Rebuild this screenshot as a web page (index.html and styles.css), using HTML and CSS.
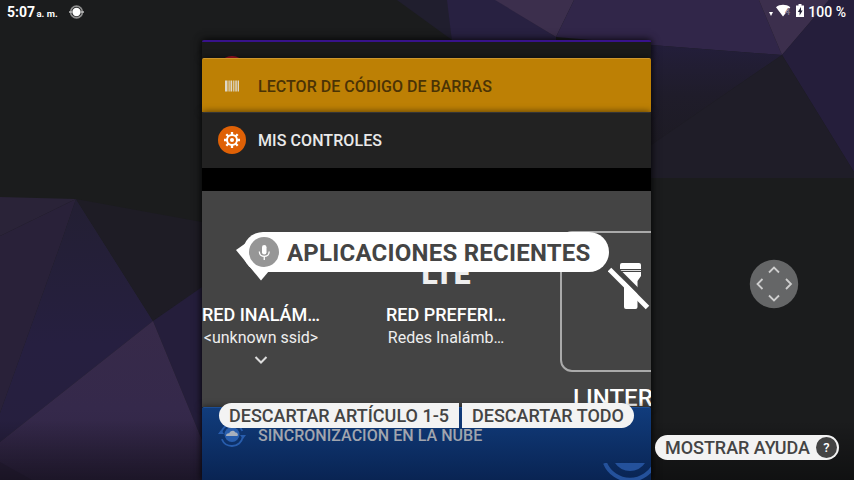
FILE: index.html
```html
<!DOCTYPE html>
<html lang="es">
<head>
<meta charset="utf-8">
<title>Aplicaciones recientes</title>
<link rel="stylesheet" href="styles.css">
</head>
<body>
<div class="screen">
  <svg class="wallpaper" viewBox="0 0 854 480" aria-hidden="true">
    <defs>
      <linearGradient id="violet" x1="0" y1="0" x2="0" y2="1"><stop offset="0" stop-color="#231f33"/><stop offset=".6" stop-color="#261f40"/><stop offset="1" stop-color="#261f3e"/></linearGradient>
      <linearGradient id="plum" x1="0" y1="0" x2="0" y2="1"><stop offset="0" stop-color="#372a49"/><stop offset=".55" stop-color="#35294b"/><stop offset="1" stop-color="#2f2442"/></linearGradient>
      <linearGradient id="dusk" x1="0" y1="0" x2="0" y2="1"><stop offset="0" stop-color="#231e3a"/><stop offset=".5" stop-color="#1f1c2a"/><stop offset="1" stop-color="#1d1b24"/></linearGradient>
      <linearGradient id="fade" x1="0" y1="0" x2="0" y2="1"><stop offset="0" stop-opacity="0"/><stop offset="1" stop-opacity=".4"/></linearGradient>
    </defs>
    <path fill="#1b1c1d" d="M0 0h854v480H0z"/>
    <path fill="#2a2338" d="M0 197l76 2L0 236z"/>
    <path fill="#292139" d="M0 236L76 199 62 240 0 413z"/>
    <path fill="url(#violet)" d="M76 199l77 122L0 442V413L62 240z"/>
    <path fill="#1e1c25" d="M76 199l126 23v65l-49 34z"/>
    <path fill="#251e3b" d="M153 321l49-34v153z"/>
    <path fill="url(#plum)" d="M153 321l49 119v40H0v-38z"/>
    <path fill="#2b213c" d="M0 462l32 18H0z"/>
    <path fill="#201e2e" d="M397 0h51l4 40z"/>
    <path fill="#282141" d="M447 0h49l60 37v5H452z"/>
    <path fill="#3c2f4d" d="M495 0h79l-18 37z"/>
    <path fill="#312649" d="M574 0h185l23 55-131-10-95-8z"/>
    <path fill="#3c2f4d" d="M759 0h70l-47 55z"/>
    <path fill="#251e3b" d="M829 0h25v172L782 55z"/>
    <path fill="url(#dusk)" d="M651 45l131 10-131 90z"/>
    <path fill="#1f1d28" d="M782 55l72 117v6H651v-33z"/>
    <path fill="url(#fade)" d="M0 420h854v60H0z"/>
  </svg>

  <header class="status">
    <div class="status-left">
      <span class="clock">5:07 <small>a. m.</small></span>
      <svg width="15" height="14" viewBox="0 0 15 14"><circle cx="7.500" cy="7" r="5.900" fill="none" stroke="#8e8e8e" stroke-width="1.600"/><circle cx="7.500" cy="7" r="4.200" fill="#fff"/><path d="M0 7h3M12 7h3" stroke="#bbb" stroke-width="1.500"/></svg>
    </div>
    <div class="status-right">
      <svg width="36" height="16" viewBox="0 0 36 16"><path fill="#fff" d="M0 9h4l-2 4zM7 4.200c4-3.200 10-3.200 14.300 0L14 13.600z"/><text x="16" y="12" class="net">4</text><path fill="#fff" d="M29.500 1h3v1.400H35V14h-8V2.400h2.500z"/><path fill="#222036" d="M32 4l-3.200 5h1.800v3.500l3-5h-1.600z"/></svg>
      <span class="charge">100 %</span>
    </div>
  </header>

  <main class="stack">
    <section class="card card-back"><svg width="28" height="2" viewBox="0 0 28 2"><circle cx="14" cy="14" r="14" fill="#ab1224"/></svg></section>
    <section class="card card-scan">
      <svg class="app-icon" viewBox="0 0 28 28"><path fill="#ded7c8" d="M7 8.500h2.500v11H7zM10.500 8.500h1.200v11h-1.200zM12.500 8.500h1.700v11h-1.700zM15.200 8.500h1.200v11h-1.200zM17.300 8.500h1.500v11h-1.500zM19.600 8.500H21v11h-1.400z"/></svg>
      <h2 class="scan-title">LECTOR DE CÓDIGO DE BARRAS</h2>
    </section>
    <section class="card card-controls">
      <div class="card-head">
        <svg class="app-icon" viewBox="0 0 28 28"><circle cx="14" cy="14" r="14" fill="#df6106"/><circle cx="14" cy="14" r="5" fill="none" stroke="#fff" stroke-width="2"/><circle cx="14" cy="14" r="2" fill="#fff"/><g stroke="#fff" stroke-width="2.300"><path d="M14 6v3M14 19v3M6 14h3M19 14h3M8.300 8.300l2.200 2.200M17.500 17.500l2.200 2.200M8.300 19.700l2.200-2.200M17.500 10.500l2.200-2.200"/></g></svg>
        <h2 class="controls-title">MIS CONTROLES</h2>
      </div>
      <div class="black-band"></div>
      <div class="tiles">
        <div class="tile tile-wifi">
          <b>RED INALÁM…</b><span>&lt;unknown ssid&gt;</span>
          <svg class="chev" width="14" height="8" viewBox="0 0 14 8"><path d="M1.500 1L7 6.500 12.500 1"/></svg>
        </div>
        <div class="tile tile-net"><em>LTE</em><b>RED PREFERI…</b><span>Redes Inalámb…</span></div>
        <div class="tile-torch">
          <div class="torch-frame"><svg width="42" height="48" viewBox="0 0 42 48"><path fill="#fff" d="M14 0h17q2 0 2 2v4H12V2q0-2 2-2z"/><path fill="#ddd" d="M12 7h21v1H12z"/><path fill="#fff" d="M12 9h21v4l-3.500 5v26q0 2-2 2H18q-2 0-2-2V18l-4-5z"/><path d="M5 3l38 38" stroke="#444" stroke-width="5"/><path d="M1.500 6.500l38 38" stroke="#fff" stroke-width="5"/></svg></div>
          <strong>LINTERNA</strong>
        </div>
      </div>
    </section>
    <section class="card card-sync">
      <svg class="app-icon" viewBox="0 0 28 28"><circle cx="14" cy="14" r="11" fill="none" stroke="#285dad" stroke-width="1.800" stroke-dasharray="28 6.560" stroke-dashoffset="-2"/><path fill="#285dad" d="M0 13l3-4 3 4zM22 14h6l-3 4z"/><circle cx="14" cy="13.500" r="7.500" fill="#285dad"/><path fill="#a8b0bd" d="M8 15c0-2 2-3 3-2.500 1-3 5-4 6.500-1 2 0 3 2 2 3.500z"/></svg>
      <h2 class="sync-title">SINCRONIZACIÓN EN LA NUBE</h2>
      <svg class="sync-art" width="49" height="17" viewBox="0 0 49 17"><path d="M3 0A27 27 0 0 0 53 0" fill="none" stroke="#24519b" stroke-width="4"/><path fill="#24519b" d="M13 0h30A18 18 0 0 1 13 0z"/></svg>
    </section>
  </main>

  <div class="voice-label">
    <svg class="pointer" width="42" height="49" viewBox="0 0 42 49"><path fill="#fff" d="M0 18l10-7 23 28-8 9.500z"/></svg>
    <svg class="mic" width="30" height="30" viewBox="0 0 30 30"><circle cx="15" cy="15" r="15" fill="#969696"/><rect x="13" y="8" width="4.500" height="9.500" rx="2.250" fill="#fff"/><path d="M10.300 14.500c0 6.500 9.900 6.500 9.900 0M15.250 19.500v3.500" fill="none" stroke="#fff" stroke-width="1.300"/></svg>
    <span>APLICACIONES RECIENTES</span>
  </div>
  <div class="dismiss">
    <button class="one">DESCARTAR ARTÍCULO 1-5</button><button class="all">DESCARTAR TODO</button>
  </div>
  <svg class="pad" width="50" height="50" viewBox="0 0 50 50"><circle cx="25" cy="25" r="24.200" fill="#656667"/><path fill="none" stroke="#cecece" stroke-width="1.800" d="M20 13.500l5-5 5 5M20 36.500l5 5 5-5M13.500 20l-5 5 5 5M37 20l5 5-5 5"/></svg>
  <button class="help"><span>MOSTRAR AYUDA</span><i>?</i></button>
</div>
</body>
</html>
```
FILE: styles.css
```css
* { box-sizing: border-box; }
body { margin: 0; font-family: Roboto, "Noto Sans", sans-serif; background: #1b1c1d; }
h2, button { margin: 0; font: inherit; font-weight: 500; white-space: nowrap; }
svg { display: block; flex: none; }
.screen { position: relative; width: 854px; height: 480px; overflow: hidden; }
.wallpaper { position: absolute; inset: 0; width: 100%; height: 100%; }
.status { position: absolute; top: 0; left: 0; right: 0; height: 24px; padding: 0 8px 0 7px; display: flex; justify-content: space-between; color: #fff; font-weight: 500; font-size: 14px; }
.status-left, .status-right { display: flex; align-items: center; }
.status-left { gap: 11px; }
.status-right { gap: 3px; }
.status-right svg { margin-top: -3px; }
.clock { width: 51px; font-weight: 700; white-space: nowrap; }
.clock small { font-size: 9.5px; margin-left: -2px; }
.net { font-size: 9px; font-weight: 700; fill: #777087; }
.stack { position: relative; width: 449px; height: 440px; margin: 40px 0 0 202px; display: flex; flex-direction: column; box-shadow: 0 0 8px #0008; }
.card { position: relative; flex: none; border-radius: 2px 2px 0 0; box-shadow: 0 0 7px #0009; }
.card h2 { font-size: 16px; letter-spacing: 0.04px; }
.app-icon { width: 28px; height: 28px; }
.card-back { height: 18px; background: #1a1a1a; border-top: 2px solid #38128b; display: flex; align-items: flex-end; padding-left: 16px; }
.card-scan { height: 54px; display: flex; align-items: center; gap: 12px; padding: 2px 16px 0; background: #bd8005; border-top: 1px solid #ce962c; color: #4b3305; }
.card-scan .app-icon, .card-head .app-icon { margin-top: -2px; }
.card-controls { height: 295px; background: #444; overflow: hidden; }
.card-head { height: 56px; display: flex; align-items: center; gap: 12px; padding: 0 16px; background: #222; border-top: 1px solid #353535; color: #e9e9e9; }
.card-head h2 { letter-spacing: 0.08px; }
.black-band { height: 23px; background: #000; }
.tiles { height: 216px; display: grid; grid-template-columns: 118px 132px 1fr; column-gap: 54px; }
.tile { display: flex; flex-direction: column; align-items: center; color: #fff; white-space: nowrap; }
.tile b { font-weight: 500; font-size: 18px; line-height: 22px; }
.tile span { font-size: 16px; line-height: 22px; color: #eee; margin-top: 1px; }
.tile-wifi { padding-top: 113px; }
.tile .chev { margin-top: 7px; fill: none; stroke: #ddd; stroke-width: 2; }
.tile-net { padding: 66px 0 0 12px; }
.tile-net em { font-style: normal; font-weight: 900; font-size: 30px; line-height: 34px; margin-bottom: 13px; color: #eee; }
.tile-torch { padding-top: 40px; }
.torch-frame { width: 141px; height: 141px; border: 2px solid #aaa; border-radius: 12px; padding: 30px 0 0 46px; }
.tile-torch strong { display: block; margin: 12px 0 0 13px; font-weight: 500; font-size: 24px; line-height: 28px; color: #fff; }
.card-sync { height: 73px; background: linear-gradient(#113c7c, #092453); border-top: 1px solid #1c4e96; display: flex; align-items: flex-start; gap: 12px; padding: 13px 0 0 16px; color: #a1a5ae; }
.card-sync h2 { padding-top: 5px; }
.sync-art { align-self: flex-end; margin-left: auto; }
.voice-label { position: absolute; left: 243px; top: 232px; width: 366px; height: 40px; border-radius: 20px; background: #fff; display: flex; align-items: center; padding-left: 6px; gap: 8px; font-size: 24px; font-weight: 700; letter-spacing: 0.23px; color: #444; white-space: nowrap; }
.voice-label span { padding-top: 1px; }
.pointer { position: absolute; left: -7px; top: 0; }
.mic { position: relative; }
.dismiss { position: absolute; left: 219px; top: 403px; display: flex; gap: 3px; }
button { border: 0; background: #f3f3f3; color: #444; height: 25px; padding: 0; font-size: 18px; }
.one { width: 240px; border-radius: 12.5px 0 0 12.5px; }
.all { width: 172px; border-radius: 0 12.5px 12.5px 0; }
.pad { position: absolute; left: 749px; top: 259px; }
.help { position: absolute; left: 655px; top: 435px; width: 184px; border-radius: 13px; display: flex; align-items: center; justify-content: space-between; padding: 0 2px 0 10px; letter-spacing: -0.04px; }
.help i { width: 21px; height: 21px; border-radius: 50%; background: #444; color: #fff; font: 500 13px/21px Roboto, sans-serif; text-align: center; }
```
